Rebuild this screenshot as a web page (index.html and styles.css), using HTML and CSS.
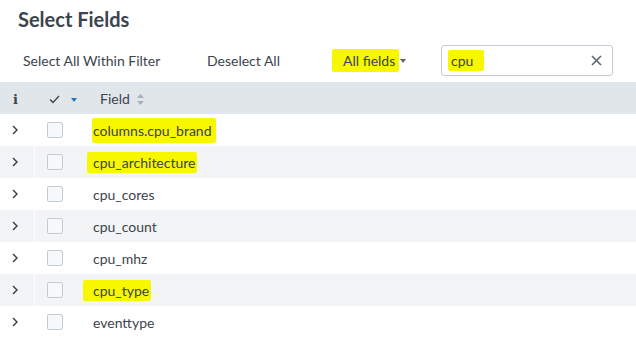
FILE: index.html
```html
<!DOCTYPE html>
<html lang="en">
<head>
    <meta charset="UTF-8">
    <title>Select Fields</title>
    <link rel="stylesheet" href="styles.css">
</head>
<body>

<div class="panel">
    <h1 class="title">Select Fields</h1>

    <div class="toolbar">
        <button class="tool-btn select-all">Select All Within Filter</button>
        <button class="tool-btn deselect">Deselect All</button>
        <button class="tool-btn filter-menu"><span class="mark mark-menu">All fields</span><span class="caret-dark"></span></button>
        <div class="search">
            <span class="search-text"><span class="mark mark-search">cpu</span></span>
            <svg class="clear" width="11" height="11" viewBox="0 0 11 11">
                <path d="M1 1 L10 10 M10 1 L1 10" stroke="#5c6773" stroke-width="1.6" fill="none"/>
            </svg>
        </div>
    </div>

    <table class="fields">
        <thead>
            <tr>
                <th class="col-info"><span class="info-i">i</span></th>
                <th class="col-check">
                    <svg width="11" height="9" viewBox="0 0 11 9">
                        <path d="M1 4.5 L4 7.5 L10 1" stroke="#3c444d" stroke-width="1.3" fill="none"/>
                    </svg>
                    <span class="caret-blue"></span>
                </th>
                <th class="col-field">Field
                    <svg class="sort" width="7" height="11" viewBox="0 0 7 11">
                        <path d="M0 4 L3.5 0 L7 4 Z M0 7 L3.5 11 L7 7 Z" fill="#a9b1ba"/>
                    </svg>
                </th>
            </tr>
        </thead>
        <tbody id="rows"></tbody>
    </table>
</div>

<script>
    const fields = [
        { name: 'columns.cpu_brand', mark: 'mark-brand' },
        { name: 'cpu_architecture', mark: 'mark-arch' },
        { name: 'cpu_cores' },
        { name: 'cpu_count' },
        { name: 'cpu_mhz' },
        { name: 'cpu_type', mark: 'mark-type' },
        { name: 'eventtype' }
    ];

    const chevron = '<svg width="6" height="10" viewBox="0 0 6 10"><path d="M1 1 L5 5 L1 9" stroke="#3c444d" stroke-width="1.5" fill="none"/></svg>';

    document.getElementById('rows').innerHTML = fields.map(f => {
        const label = f.mark ? `<span class="mark ${f.mark}">${f.name}</span>` : f.name;
        return `
            <tr>
                <td class="col-info">${chevron}</td>
                <td class="col-check"><span class="checkbox"></span></td>
                <td class="col-field">${label}</td>
            </tr>`;
    }).join('');
</script>

</body>
</html>
```

FILE: styles.css
```css
* {
    box-sizing: border-box;
    margin: 0;
    padding: 0;
}

body {
    font-family: 'Lato', 'Open Sans', sans-serif;
    color: #3c444d;
    background: #fff;
}

.panel {
    width: 636px;
}

.title {
    font-size: 20px;
    font-weight: bold;
    line-height: 24px;
    padding: 7px 0 0 18px;
    height: 45px;
    color: #3c444d;
}

.toolbar {
    display: flex;
    align-items: center;
    height: 31px;
    margin-bottom: 6px;
}

.tool-btn {
    background: none;
    border: none;
    font-family: inherit;
    font-size: 14px;
    color: #3c444d;
    text-align: left;
    display: flex;
    align-items: center;
}

.select-all {
    padding-left: 23px;
    width: 207px;
}

.deselect {
    width: 125px;
}

.filter-menu {
    width: 109px;
}

.mark {
    background: #f7f700;
    border-radius: 2px;
}

.mark-menu {
    padding: 3px 4px 3px 11px;
}

.caret-dark {
    width: 0;
    height: 0;
    border-left: 3.5px solid transparent;
    border-right: 3.5px solid transparent;
    border-top: 4px solid #5c6773;
    margin-left: 1px;
}

.search {
    width: 172px;
    height: 31px;
    border: 1px solid #c3cbd4;
    border-radius: 3px;
    display: flex;
    align-items: center;
    justify-content: space-between;
    padding: 0 10px 0 6px;
}

.search-text {
    font-size: 14px;
}

.mark-search {
    padding: 2px 11px 2px 3px;
}

.fields {
    width: 100%;
    border-collapse: collapse;
    font-size: 14px;
}

.fields th {
    background: #e1e6eb;
    height: 32px;
    font-weight: normal;
    text-align: left;
    vertical-align: middle;
}

.fields td {
    height: 32px;
    vertical-align: middle;
}

.fields tbody tr:nth-child(even) td {
    background: #f2f4f5;
}

.col-info {
    width: 34px;
    padding-left: 12px;
    border-right: 1px solid #fff;
}

.fields th.col-info {
    border-right: none;
    padding-left: 13px;
}

.info-i {
    font-family: 'DejaVu Serif', serif;
    font-weight: bold;
    font-size: 13px;
}

.fields td.col-info svg {
    display: block;
}

.col-check {
    width: 51px;
    padding-left: 12px;
}

.fields th.col-check {
    padding-left: 15px;
}

.caret-blue {
    display: inline-block;
    width: 0;
    height: 0;
    border-left: 3px solid transparent;
    border-right: 3px solid transparent;
    border-top: 4px solid #1a78c2;
    margin-left: 7px;
    vertical-align: middle;
}

.checkbox {
    display: block;
    width: 16px;
    height: 16px;
    border: 1px solid #c3cbd4;
    border-radius: 2px;
    background: #f7f8fa;
}

.col-field {
    padding-left: 8px;
}

.fields th.col-field {
    padding-left: 15px;
}

.sort {
    margin-left: 4px;
    vertical-align: -1px;
}

.mark-brand {
    padding: 4px 4px 4px 1px;
    margin-left: -1px;
}

.mark-arch {
    padding: 2px 2px 2px 6px;
    margin-left: -6px;
}

.mark-type {
    padding: 2px 2px 2px 10px;
    margin-left: -10px;
}
```
